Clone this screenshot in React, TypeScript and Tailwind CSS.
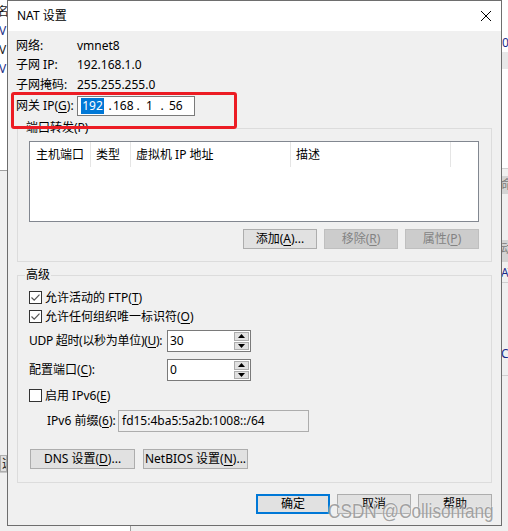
import React from "react";

// mnemonic letter, underlined like a Win32 accelerator
const M = ({ c }: { c: string }) => (
  <span className="underline decoration-1 underline-offset-[2px]">{c}</span>
);

type BtnProps = {
  label: React.ReactNode;
  className: string;
  disabled?: boolean;
  primary?: boolean;
};

function Btn({ label, className, disabled, primary }: BtnProps) {
  const look = disabled
    ? "border border-[#bfbfbf] bg-[#cccccc] text-[#838383]"
    : primary
      ? "border-2 border-[#0078d7] bg-[#e1e1e1]"
      : "border border-[#adadad] bg-[#e1e1e1]";
  return (
    <div className={`flex h-[20px] shrink-0 items-center justify-center whitespace-nowrap ${look} ${className}`}>
      {label}
    </div>
  );
}

function Check({ checked }: { checked?: boolean }) {
  return (
    <div className="flex h-[13px] w-[13px] shrink-0 items-center justify-center border border-[#333333] bg-white">
      {checked && (
        <svg width="11" height="11" viewBox="0 0 11 11" fill="none">
          <path d="M1.5 5.5 L4.2 8.2 L9.5 2.6" stroke="#555555" strokeWidth="1.2" />
        </svg>
      )}
    </div>
  );
}

function Spin({ value }: { value: string }) {
  return (
    <div className="flex h-[22px] w-[84px] shrink-0 border border-[#7a7a7a] bg-white">
      <div className="flex flex-1 items-center pl-[2px]">{value}</div>
      <div className="flex w-[16px] flex-col gap-[1px] py-[1px] pr-[1px]">
        <div className="flex h-[9px] items-center justify-center border border-[#adadad] bg-[#e1e1e1]">
          <svg width="7" height="4" viewBox="0 0 7 4">
            <polygon points="0,4 3.5,0 7,4" fill="#000" />
          </svg>
        </div>
        <div className="flex h-[9px] items-center justify-center border border-[#adadad] bg-[#e1e1e1]">
          <svg width="7" height="4" viewBox="0 0 7 4">
            <polygon points="0,0 3.5,4 7,0" fill="#000" />
          </svg>
        </div>
      </div>
    </div>
  );
}

function Group({ title, className, children }: { title: string; className: string; children: React.ReactNode }) {
  return (
    <div className={`relative w-[475px] border border-[#dcdcdc] pl-[11px] pr-[12px] ${className}`}>
      <span className="absolute left-[7px] top-[-9px] bg-[#f0f0f0] px-[1px] leading-[16px]">{title}</span>
      {children}
    </div>
  );
}

function Backdrop() {
  return (
    <div className="flex h-full w-full">
      {/* window peeking out on the left */}
      <div className="flex w-[7px] flex-col overflow-hidden text-[12px] leading-[19px] text-[#1a1a1a]">
        <div className="h-[170px] bg-white pt-[2px]">
          <div className="-ml-[3px]">名</div>
          <div className="-ml-[1px] text-[#23318a]">V</div>
          <div className="-ml-[1px]">V</div>
          <div className="-ml-[1px] text-[#23318a]">V</div>
        </div>
        <div className="h-[285px] border-t border-[#a0a0a0] bg-[#f0f0f0]" />
        <div className="flex h-[17px] items-center overflow-hidden border border-[#adadad] bg-[#e1e1e1] pl-[1px]">这</div>
        <div className="flex-1 border-t border-[#c8c8c8] bg-[#f0f0f0]" />
      </div>
      <div className="flex flex-1 flex-col justify-end">
        <div className="flex h-[5px]">
          <div className="w-[73px] bg-[#f0f0f0]" />
          <div className="w-[50px] bg-white" />
          <div className="w-px bg-[#a0a0a0]" />
          <div className="flex-1 bg-[#f0f0f0]" />
        </div>
      </div>
      {/* window peeking out on the right */}
      <div className="flex w-[7px] flex-col overflow-hidden text-[12px] leading-[18px] text-[#1a1a1a]">
        <div className="h-[52px] bg-white pt-[34px] pl-px text-[#1b2a8a]">0</div>
        <div className="h-[17px] bg-[#e8e8e8]" />
        <div className="h-[99px] bg-white" />
        <div className="h-[8px] border-t border-[#d0d0d0] bg-[#f0f0f0]" />
        <div className="h-[18px] bg-[#d4d4d4] text-[#7a7a7a]">命</div>
        <div className="h-[46px] bg-[#f0f0f0]" />
        <div className="h-[22px] bg-[#d4d4d4] text-[#7a7a7a]">动</div>
        <div className="h-[20px] bg-[#f0f0f0] pt-[2px] text-[#1b2a8a]">AT</div>
        <div className="h-[63px] border-t border-[#d0d0d0] bg-[#f0f0f0]" />
        <div className="h-[30px] bg-[#f0f0f0] text-[#1b2a8a]">CP</div>
        <div className="flex-1 border-t border-[#d0d0d0] bg-[#f0f0f0]" />
      </div>
    </div>
  );
}

export default function App() {
  return (
    <div className="relative h-[531px] w-[508px] overflow-hidden bg-white font-['Noto_Sans','Noto_Sans_CJK_SC',sans-serif] text-[12px] leading-[16px] text-black">
      <div className="absolute inset-0">
        <Backdrop />
      </div>

      {/* NAT settings dialog */}
      <div className="absolute left-[7px] top-0 flex h-[526px] w-[495px] flex-col border border-[#6e6e6e] bg-[#f0f0f0]">
        <div className="flex h-[30px] shrink-0 items-center justify-between bg-white pl-[9px] pr-[10px]">
          <span>NAT 设置</span>
          <svg width="10" height="10" viewBox="0 0 10 10">
            <path d="M0 0 L10 10 M10 0 L0 10" stroke="#000" strokeWidth="1" />
          </svg>
        </div>

        <div className="flex flex-col whitespace-nowrap pl-[9px] pr-[8px] pt-[5px]">
          <div className="-ml-px flex h-[19px] items-center">
            <span className="w-[61px]">网络:</span>
            <span>vmnet8</span>
          </div>
          <div className="-ml-px flex h-[20px] items-center">
            <span className="w-[61px]">子网 IP:</span>
            <span>192.168.1.0</span>
          </div>
          <div className="-ml-px flex h-[20px] items-center">
            <span className="w-[61px]">子网掩码:</span>
            <span>255.255.255.0</span>
          </div>
          <div className="-ml-px flex h-[22px] items-center">
            <span className="w-[61px]">
              网关 IP(<M c="G" />):
            </span>
            <div className="flex h-[20px] w-[118px] items-center border border-[#7a7a7a] bg-white">
              <span className="flex w-[29px] justify-center">
                <span className="bg-[#0078d7] px-px text-white">192</span>
              </span>
              <span className="flex w-[6px] justify-center">.</span>
              <span className="w-[22px]">168</span>
              <span className="flex w-[6px] justify-center">.</span>
              <span className="w-[18px] pl-[5px]">1</span>
              <span className="flex w-[6px] justify-center">.</span>
              <span className="pl-[4px]">56</span>
            </div>
          </div>

          <Group title="端口转发(P)" className="mt-[11px] pb-[12px] pt-[12px]">
            <div className="h-[81px] border border-[#828790] bg-white">
              <div className="flex h-[25px]">
                <div className="flex w-[61px] items-center border-r border-[#e5e5e5] pl-[6px]">主机端口</div>
                <div className="flex w-[40px] items-center border-r border-[#e5e5e5] pl-[5px]">类型</div>
                <div className="flex w-[160px] items-center border-r border-[#e5e5e5] pl-[5px]">虚拟机 IP 地址</div>
                <div className="flex w-[160px] items-center border-r border-[#e5e5e5] pl-[5px]">描述</div>
              </div>
            </div>
            <div className="mt-[7px] flex justify-end gap-[7px]">
              <Btn className="w-[74px]" label={<>添加(<M c="A" />)...</>} />
              <Btn className="w-[74px]" disabled label={<>移除(<M c="R" />)</>} />
              <Btn className="w-[74px]" disabled label={<>属性(<M c="P" />)</>} />
            </div>
          </Group>

          <Group title="高级" className="mt-[13px] pb-[13px] pt-[12px]">
            <div className="flex h-[19px] items-center gap-[3px]">
              <Check checked />
              <span>
                允许活动的 FTP(<M c="T" />)
              </span>
            </div>
            <div className="flex h-[19px] items-center gap-[3px]">
              <Check checked />
              <span>
                允许任何组织唯一标识符(<M c="O" />)
              </span>
            </div>
            <div className="mt-[4px] flex h-[22px] items-center">
              <span className="w-[138px] shrink-0 tracking-[-0.3px]">
                UDP 超时(以秒为单位)(<M c="U" />):
              </span>
              <Spin value="30" />
            </div>
            <div className="mt-[7px] flex h-[22px] items-center">
              <span className="w-[138px] shrink-0">
                配置端口(<M c="C" />):
              </span>
              <Spin value="0" />
            </div>
            <div className="mt-[5px] flex h-[19px] items-center gap-[3px]">
              <Check />
              <span>
                启用 IPv6(<M c="E" />)
              </span>
            </div>
            <div className="mt-[5px] flex h-[22px] items-center pl-[18px]">
              <span className="w-[71px] shrink-0">
                IPv6 前缀(<M c="6" />):
              </span>
              <div className="flex h-[22px] w-[191px] items-center border border-[#adadad] bg-[#f0f0f0] pl-[3px]">
                fd15:4ba5:5a2b:1008::/64
              </div>
            </div>
            <div className="ml-px mt-[17px] flex gap-[8px]">
              <Btn className="w-[105px]" label={<>DNS 设置(<M c="D" />)...</>} />
              <Btn className="w-[105px]" label={<>NetBIOS 设置(<M c="N" />)...</>} />
            </div>
          </Group>

          <div className="mt-[11px] flex w-[475px] justify-end gap-[7px]">
            <Btn className="w-[74px]" primary label="确定" />
            <Btn className="w-[74px]" label="取消" />
            <Btn className="w-[74px]" label="帮助" />
          </div>
        </div>

        {/* red highlight drawn over the gateway row */}
        <div className="absolute left-[3px] top-[91px] h-[37px] w-[226px] rounded-[3px] border-[3px] border-[#ec1c24]" />
      </div>

      {/* CSDN watermark */}
      <div className="absolute left-[328px] top-[500px] origin-left scale-x-[0.86] whitespace-nowrap font-['Liberation_Sans',sans-serif] text-[20px] leading-[22px] text-[#9b9b9b] opacity-90 [text-shadow:0_0_2px_#ffffff]">
        CSDN @Collisonfang
      </div>
    </div>
  );
}
